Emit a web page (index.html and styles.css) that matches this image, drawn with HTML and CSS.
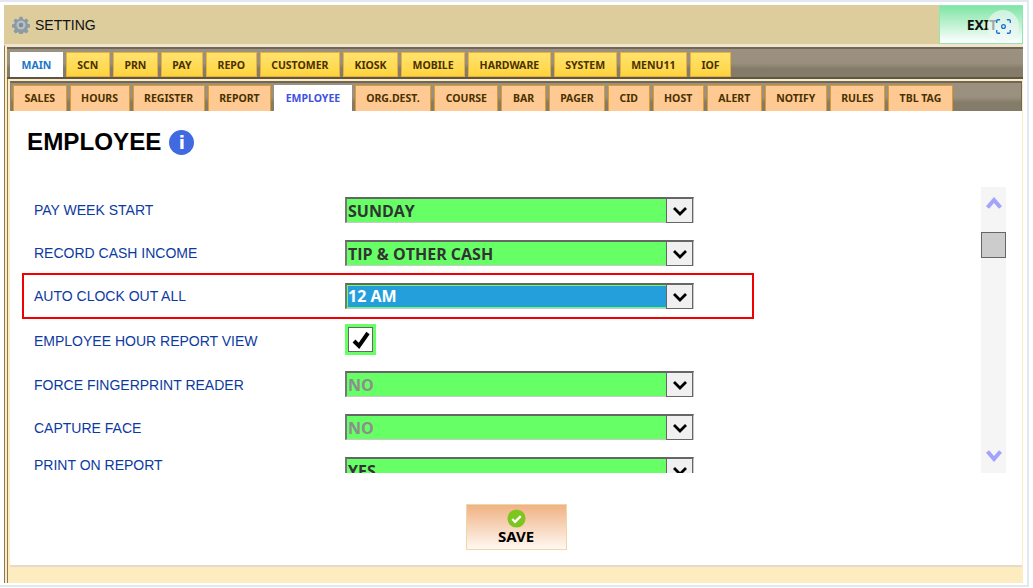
FILE: index.html
```html
<!DOCTYPE html>
<html>
<head>
    <meta charset="UTF-8">
    <title>Setting</title>
    <link rel="stylesheet" href="styles.css">
</head>
<body>
    <div class="window">
        <div class="title-bar">
            <div class="title">
                <svg class="gear" viewBox="0 0 24 24">
                    <path fill="#8c9ba3" d="M10 1h4l.6 3 2 .9 2.600-1.700 2.800 2.800-1.700 2.600.9 2 3 .6v4l-3 .6-.9 2 1.700 2.600-2.800 2.800-2.600-1.700-2 .9-.6 3h-4l-.6-3-2-.9-2.600 1.700-2.800-2.800 1.700-2.600-.9-2-3-.6v-4l3-.6.9-2-1.700-2.600 2.800-2.800 2.600 1.700 2-.9z"/>
                    <circle cx="12" cy="12" r="6" fill="#b4c0c6"/>
                    <circle cx="12" cy="12" r="3" fill="#7e8d95"/>
                </svg>
                SETTING
            </div>
            <button class="exit-button">EXIT</button>
            <div class="scan-badge">
                <svg viewBox="0 0 20 20" fill="none" stroke="#1f6fd0" stroke-width="1.600">
                    <path d="M2 6V3.500A1.500 1.500 0 0 1 3.500 2H6M14 2h2.500A1.500 1.500 0 0 1 18 3.500V6M18 14v2.500a1.500 1.500 0 0 1-1.500 1.500H14M6 18H3.500A1.500 1.500 0 0 1 2 16.500V14"/>
                    <circle cx="10" cy="10" r="2.200"/>
                </svg>
            </div>
        </div>

        <div class="panel">
            <div class="tab-bar main-tabs">
                <a class="tab active">MAIN</a>
                <a class="tab">SCN</a>
                <a class="tab">PRN</a>
                <a class="tab">PAY</a>
                <a class="tab">REPO</a>
                <a class="tab">CUSTOMER</a>
                <a class="tab">KIOSK</a>
                <a class="tab">MOBILE</a>
                <a class="tab">HARDWARE</a>
                <a class="tab">SYSTEM</a>
                <a class="tab">MENU11</a>
                <a class="tab">IOF</a>
            </div>

            <div class="sub-panel">
                <div class="tab-bar sub-tabs">
                    <a class="tab">SALES</a>
                    <a class="tab">HOURS</a>
                    <a class="tab">REGISTER</a>
                    <a class="tab">REPORT</a>
                    <a class="tab active">EMPLOYEE</a>
                    <a class="tab">ORG.DEST.</a>
                    <a class="tab">COURSE</a>
                    <a class="tab">BAR</a>
                    <a class="tab">PAGER</a>
                    <a class="tab">CID</a>
                    <a class="tab">HOST</a>
                    <a class="tab">ALERT</a>
                    <a class="tab">NOTIFY</a>
                    <a class="tab">RULES</a>
                    <a class="tab">TBL TAG</a>
                </div>

                <div class="content">
                    <h1>EMPLOYEE <span class="info">i</span></h1>

                    <div class="scroll-area">
                        <div class="rows">
                            <div class="row">
                                <label>PAY WEEK START</label>
                                <div class="select"><span class="value">SUNDAY</span><span class="arrow"><svg viewBox="0 0 16 10"><path d="M2 2l6 6 6-6"/></svg></span></div>
                            </div>
                            <div class="row">
                                <label>RECORD CASH INCOME</label>
                                <div class="select"><span class="value">TIP &amp; OTHER CASH</span><span class="arrow"><svg viewBox="0 0 16 10"><path d="M2 2l6 6 6-6"/></svg></span></div>
                            </div>
                            <div class="row highlighted">
                                <label>AUTO CLOCK OUT ALL</label>
                                <div class="select focused"><span class="value">12 AM</span><span class="arrow"><svg viewBox="0 0 16 10"><path d="M2 2l6 6 6-6"/></svg></span></div>
                            </div>
                            <div class="row check-row low">
                                <label>EMPLOYEE HOUR REPORT VIEW</label>
                                <div class="check"><svg viewBox="0 0 20 20"><path d="M3 11l5 5 9-13"/></svg></div>
                            </div>
                            <div class="row low">
                                <label>FORCE FINGERPRINT READER</label>
                                <div class="select muted"><span class="value">NO</span><span class="arrow"><svg viewBox="0 0 16 10"><path d="M2 2l6 6 6-6"/></svg></span></div>
                            </div>
                            <div class="row low">
                                <label>CAPTURE FACE</label>
                                <div class="select muted"><span class="value">NO</span><span class="arrow"><svg viewBox="0 0 16 10"><path d="M2 2l6 6 6-6"/></svg></span></div>
                            </div>
                            <div class="row last-row">
                                <label>PRINT ON REPORT</label>
                                <div class="select"><span class="value">YES</span><span class="arrow"><svg viewBox="0 0 16 10"><path d="M2 2l6 6 6-6"/></svg></span></div>
                            </div>
                        </div>

                        <div class="scrollbar">
                            <svg class="scroll-arrow" viewBox="0 0 16 12"><path d="M1.500 10.500L8 3l6.500 7.500"/></svg>
                            <div class="thumb"></div>
                            <svg class="scroll-arrow down" viewBox="0 0 16 12"><path d="M1.500 1.500L8 9l6.500-7.500"/></svg>
                        </div>
                    </div>

                    <div class="actions">
                        <button class="save-button">
                            <svg viewBox="0 0 20 20">
                                <circle cx="10" cy="10" r="9.500" fill="#7cc61e"/>
                                <path d="M5.500 10.500l3 3 6-6" fill="none" stroke="#fff" stroke-width="2.400"/>
                            </svg>
                            SAVE
                        </button>
                    </div>
                </div>
            </div>
            <div class="status-bar"></div>
        </div>
    </div>
</body>
</html>
```

FILE: styles.css
```css
* {
    box-sizing: border-box;
}

html {
    height: 100%;
    background-color: #fff;
}

body {
    width: 1029px;
    height: 587px;
    margin: 0;
    padding: 3px 0 0 4px;
    border-top: 2px solid #e3e8ee;
    border-right: 2px solid #e3e8ee;
    border-bottom: 2px solid #e3e8ee;
    font-family: "Liberation Sans", Arial, sans-serif;
    overflow: hidden;
}

.window {
    display: flex;
    flex-direction: column;
    width: 1019px;
    height: 578px;
}

.title-bar {
    position: relative;
    display: flex;
    justify-content: space-between;
    height: 39px;
    background-color: #ddcd9d;
}

.title {
    display: flex;
    align-items: center;
    gap: 5px;
    padding-left: 8px;
    font-size: 14px;
    color: #111;
}

.gear {
    width: 18px;
    height: 18px;
}

.exit-button {
    width: 84px;
    padding: 0 0 0 2px;
    border: 1px solid #8fe8b0;
    background: linear-gradient(#7fe5a5, #ffffff);
    font-family: "Noto Sans", sans-serif;
    font-size: 14px;
    font-weight: bold;
    color: #111;
}

.scan-badge {
    position: absolute;
    top: 5px;
    right: 4px;
    display: flex;
    align-items: center;
    justify-content: center;
    width: 32px;
    height: 32px;
    border-radius: 50%;
    background-color: rgba(240, 248, 248, 0.65);
}

.scan-badge svg {
    width: 17px;
    height: 17px;
}

.panel {
    display: flex;
    flex-direction: column;
    flex: 1;
    min-height: 0;
    padding-left: 2px;
    border-left: 1px solid #8c7a58;
    border-top: 3px solid #efe6cb;
    background-color: #fdecbf;
    box-shadow: inset 2px 0 #fdecbf, inset 3px 0 #8c7a58;
}

.tab-bar {
    display: flex;
    align-items: flex-end;
    background: linear-gradient(#9c917f 0%, #9a9080 50%, #857b69 70%, #857b69 100%);
    font-family: "Noto Sans", sans-serif;
    font-size: 10.500px;
    font-weight: bold;
}

.tab {
    display: block;
    text-align: center;
}

.main-tabs {
    gap: 3px;
    height: 32px;
    padding: 0 0 0 3px;
    border-top: 2px solid #6f675a;
    border-bottom: 2px solid #5c5548;
}

.main-tabs .tab {
    height: 25px;
    padding: 0 10.500px;
    line-height: 24px;
    border: 1px solid #e8b23a;
    background: linear-gradient(#ffe26f, #ffd94f 70%, #ffd23c);
    color: #4a3100;
}

.main-tabs .tab.active {
    background: #fff;
    border-color: #fff;
    color: #1a76c8;
}

.sub-panel {
    display: flex;
    flex-direction: column;
    flex: 1;
    min-height: 0;
    margin: 2px 0 0 3px;
    width: 1012px;
    border-bottom: 2px solid #e2dcc9;
    background-color: #fff;
}

.sub-tabs {
    gap: 3px;
    height: 30px;
    padding-left: 2px;
    border-top: 2px solid #6f675a;
    border-right: 1px solid #6f675a;
    border-left: 1px solid #8a8170;
}

.sub-tabs .tab {
    height: 26px;
    padding: 0 10.500px;
    line-height: 24px;
    border: 1px solid #e09a2a;
    border-bottom: 0;
    background-color: #ffc993;
    color: #4a3100;
}

.sub-tabs .tab.active {
    background-color: #fff;
    border-color: #fff;
    color: #3f51e0;
}

.content {
    flex: 1;
    min-height: 0;
}

h1 {
    display: flex;
    align-items: center;
    gap: 8px;
    height: 76px;
    margin: 0;
    padding: 0 0 14px 17px;
    font-size: 24.200px;
    font-weight: bold;
    color: #000;
}

.info {
    display: flex;
    align-items: center;
    justify-content: center;
    width: 25px;
    height: 25px;
    border-radius: 50%;
    background-color: #4169e1;
    font-family: "DejaVu Sans", sans-serif;
    font-size: 18px;
    color: #fff;
}

.scroll-area {
    display: flex;
    height: 286px;
    overflow: hidden;
}

.rows {
    width: 971px;
    padding: 10px 0 0 12px;
}

.row {
    display: flex;
    align-items: center;
    width: 732px;
    height: 26px;
    margin-bottom: 17px;
}

.row label {
    width: 323px;
    padding-left: 12px;
    font-size: 14px;
    color: #0c3aa0;
}

.low label {
    margin-top: 2px;
}

.highlighted {
    height: 46px;
    margin: -10px 0 5px 0;
    border: 2px solid #f00000;
}

.highlighted label {
    width: 321px;
    padding-left: 10px;
}

.check-row {
    height: 31px;
    margin-bottom: 16px;
}

.last-row label {
    margin-top: -10px;
}

.select {
    display: flex;
    flex: none;
    width: 349px;
    height: 26px;
    border: 1px solid #c9c9c9;
    border-top: 2px solid #666;
    border-left: 2px solid #777;
    background-color: #66ff66;
    font-family: "Open Sans", sans-serif;
    font-size: 16px;
    font-weight: bold;
    color: #333;
}

.value {
    flex: 1;
    padding-left: 1px;
    line-height: 25px;
    white-space: nowrap;
}

.focused .value {
    margin: 1px 0;
    padding-left: 0;
    line-height: 20px;
    background-color: #259fdb;
    color: #fff;
    border-left: 1px solid #66ff66;
}

.muted .value {
    color: #8d8d8d;
}

.arrow {
    display: flex;
    align-items: center;
    justify-content: center;
    width: 27px;
    height: 24px;
    border: 1px solid #666;
    border-width: 0 1px 1px 1px;
    background-color: #f0f0f0;
}

.arrow svg {
    width: 16px;
    height: 10px;
    fill: none;
    stroke: #000;
    stroke-width: 2.800;
}

.check {
    display: flex;
    flex: none;
    align-items: center;
    justify-content: center;
    width: 31px;
    height: 31px;
    border: 3px solid #66ff66;
    outline: 1px solid #666;
    outline-offset: -4px;
    background-color: #fff;
}

.check svg {
    width: 20px;
    height: 20px;
    fill: none;
    stroke: #000;
    stroke-width: 4;
}

.scrollbar {
    display: flex;
    flex-direction: column;
    align-items: center;
    width: 25px;
    background-color: #f5f5f5;
}

.scroll-arrow {
    flex: none;
    width: 16px;
    height: 12px;
    margin-top: 10px;
    fill: none;
    stroke: #a3a3ff;
    stroke-width: 4;
}

.scroll-arrow.down {
    margin-top: 192px;
}

.thumb {
    flex: none;
    width: 25px;
    height: 26px;
    margin-top: 23px;
    border: 1px solid #666;
    background-color: #cccccc;
}

.actions {
    display: flex;
    justify-content: center;
    padding-top: 31px;
}

.save-button {
    display: flex;
    flex-direction: column;
    align-items: center;
    width: 101px;
    height: 46px;
    padding: 4px 0 0;
    border: 1px solid #eed7a8;
    background: linear-gradient(#f0b284, #fff8f2);
    font-family: "Noto Sans", sans-serif;
    font-size: 15px;
    font-weight: bold;
    line-height: 16px;
    color: #000;
}

.save-button svg {
    flex: none;
    width: 19px;
    height: 19px;
}

.status-bar {
    flex: none;
    height: 16px;
}
```
